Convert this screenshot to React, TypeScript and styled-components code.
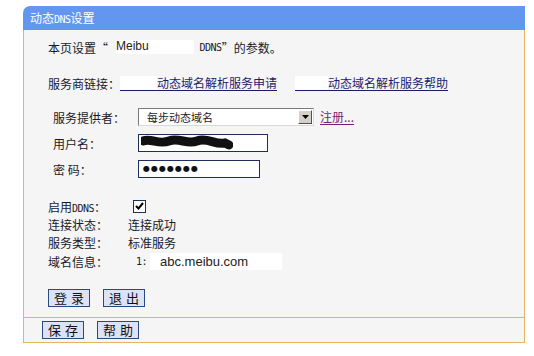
import React from "react";
import styled, { createGlobalStyle } from "styled-components";

const GlobalStyle = createGlobalStyle`
  html, body {
    margin: 0;
    padding: 0;
    background: #ffffff;
  }
  body {
    font-family: "Noto Sans CJK SC", "DejaVu Sans", sans-serif;
    font-size: 12px;
    color: #1a1a28;
  }
`;

const Panel = styled.div`
  width: 502px;
  margin: 6px 0 0 23px;
  display: flex;
  flex-direction: column;
`;

const TitleBar = styled.div`
  height: 24px;
  background: #6397ef;
  border-top-left-radius: 7px;
  color: #ffffff;
  font-size: 12px;
  line-height: 24px;
  padding-left: 7px;
`;

const Body = styled.div`
  background: #f5f5f5;
  border-left: 1px solid #e7b264;
  border-right: 1px solid #e7b264;
  padding: 8px 0 10px 24px;
  display: flex;
  flex-direction: column;
`;

const Footer = styled.div`
  background: #f5f5f5;
  border: 1px solid #e7b264;
  height: 24px;
  padding-left: 18px;
  display: flex;
  align-items: center;
  gap: 13px;
`;

const Line = styled.div<{ $top?: number; $indent?: number }>`
  display: flex;
  align-items: center;
  height: 18px;
  margin-top: ${(p) => p.$top ?? 0}px;
  padding-left: ${(p) => p.$indent ?? 0}px;
  white-space: nowrap;
`;

const Label = styled.span<{ $w: number }>`
  display: inline-block;
  width: ${(p) => p.$w}px;
  flex-shrink: 0;
`;

const Mono = styled.span`
  font-family: "DejaVu Sans Mono", "Liberation Mono", monospace;
  font-size: 10px;
  letter-spacing: -0.5px;
`;

const WhiteBox = styled.span<{ $w: number; $pad?: number }>`
  display: inline-block;
  box-sizing: border-box;
  width: ${(p) => p.$w}px;
  height: 14px;
  padding-left: ${(p) => p.$pad ?? 0}px;
  background: #ffffff;
  font-family: "Liberation Sans", Arial, sans-serif;
  font-size: 12px;
  line-height: 13px;
  color: #222;
`;

const DomainBox = styled(WhiteBox)`
  height: 17px;
  line-height: 17px;
  font-size: 13px;
`;

const Gap = styled.span<{ $w: number }>`
  display: inline-block;
  width: ${(p) => p.$w}px;
`;

const TextLink = styled.a<{ $purple?: boolean }>`
  color: ${(p) => (p.$purple ? "#7a1c7a" : "#1c1c6c")};
  text-decoration: none;
  border-bottom: 1px solid currentColor;
  line-height: 15px;
  display: inline-flex;
  align-items: center;
  cursor: pointer;
`;

const SelectBox = styled.div`
  width: 166px;
  height: 16px;
  background: #ffffff;
  border: 1px solid #7a7a7a;
  border-right-color: #d8d8d8;
  border-bottom-color: #d8d8d8;
  display: flex;
  align-items: center;
  justify-content: space-between;
  padding-left: 8px;
  box-sizing: content-box;
  margin-right: 6px;
`;

const SelectText = styled.span`
  font-size: 11px;
`;

const SelectArrow = styled.span`
  width: 14px;
  height: 14px;
  margin-right: 1px;
  background: #d4d0c8;
  border: 1px solid #ffffff;
  border-right-color: #505050;
  border-bottom-color: #505050;
  box-sizing: border-box;
  display: flex;
  align-items: center;
  justify-content: center;
`;

const TextInput = styled.div<{ $w: number }>`
  width: ${(p) => p.$w}px;
  height: 16px;
  background: #ffffff;
  border: 1px solid #1f2f5a;
  display: flex;
  align-items: center;
  padding-left: 2px;
  box-sizing: content-box;
  overflow: hidden;
`;

const Dots = styled.span`
  font-family: "DejaVu Sans", sans-serif;
  font-size: 8px;
  letter-spacing: 1px;
  color: #111;
  line-height: 16px;
  padding-left: 2px;
`;

const Check = styled.span`
  width: 11px;
  height: 11px;
  border: 1px solid #1f2f5a;
  background: #ffffff;
  display: inline-flex;
  align-items: center;
  justify-content: center;
`;

const Button = styled.button`
  width: 42px;
  height: 18px;
  padding: 0;
  background: #dde2f6;
  border: 1px solid #294a7c;
  font-family: "Noto Sans CJK SC", sans-serif;
  font-size: 13px;
  line-height: 16px;
  letter-spacing: 4px;
  text-indent: 4px;
  color: #111;
  cursor: pointer;
`;

const ButtonRow = styled.div`
  display: flex;
  gap: 13px;
  margin-top: 19px;
`;

export default function App() {
  return (
    <>
      <GlobalStyle />
      <Panel>
        <TitleBar>
          动态<Mono>DNS</Mono>设置
        </TitleBar>
        <Body>
          <Line>
            本页设置“<Gap $w={8} />
            <WhiteBox $w={78}>Meibu</WhiteBox>
            <Mono>&nbsp;DDNS</Mono>”的参数。
          </Line>

          <Line $top={18}>
            <Label $w={72}>服务商链接：</Label>
            <TextLink>
              <WhiteBox $w={37} />
              动态域名解析服务申请
            </TextLink>
            <Gap $w={18} />
            <TextLink>
              <WhiteBox $w={33} />
              动态域名解析服务帮助
            </TextLink>
          </Line>

          <Line $top={16} $indent={5}>
            <Label $w={85}>服务提供者：</Label>
            <SelectBox>
              <SelectText>每步动态域名</SelectText>
              <SelectArrow>
                <svg width="7" height="4" viewBox="0 0 7 4">
                  <path d="M0 0h7L3.5 4z" fill="#000" />
                </svg>
              </SelectArrow>
            </SelectBox>
            <TextLink $purple>注册...</TextLink>
          </Line>

          <Line $top={8} $indent={5}>
            <Label $w={85}>用户名：</Label>
            <TextInput $w={126}>
              <svg width="92" height="16" viewBox="0 0 92 16">
                <path
                  d="M2 6 C10 3 18 10 28 6 S46 10 56 6 S74 10 84 8 L88 10"
                  stroke="#111"
                  strokeWidth="9"
                  strokeLinecap="round"
                  fill="none"
                />
              </svg>
            </TextInput>
          </Line>

          <Line $top={8} $indent={5}>
            <Label $w={85}>密&nbsp;码：</Label>
            <TextInput $w={118}>
              <Dots>●●●●●●●</Dots>
            </TextInput>
          </Line>

          <Line $top={19}>
            <Label $w={85}>
              启用<Mono>DDNS</Mono>：
            </Label>
            <Check>
              <svg width="9" height="8" viewBox="0 0 9 8">
                <path d="M1 4l2.5 2.5L8 1" stroke="#000" strokeWidth="2" fill="none" />
              </svg>
            </Check>
          </Line>

          <Line>
            <Label $w={80}>连接状态：</Label>
            连接成功
          </Line>

          <Line>
            <Label $w={80}>服务类型：</Label>
            标准服务
          </Line>

          <Line $top={1}>
            <Label $w={88}>域名信息：</Label>
            <Mono style={{ width: 14, display: "inline-block" }}>1:</Mono>
            <DomainBox $w={132} $pad={10}>
              abc.meibu.com
            </DomainBox>
          </Line>

          <ButtonRow>
            <Button>登录</Button>
            <Button>退出</Button>
          </ButtonRow>
        </Body>
        <Footer>
          <Button>保存</Button>
          <Button>帮助</Button>
        </Footer>
      </Panel>
    </>
  );
}
